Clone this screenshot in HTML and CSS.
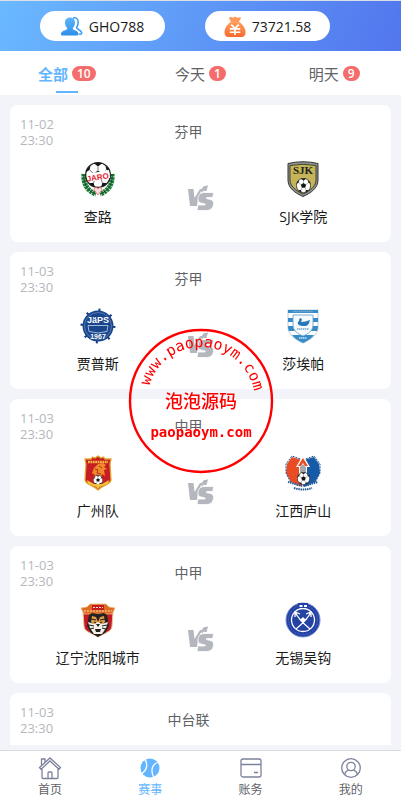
FILE: index.html
```html
<!DOCTYPE html>
<html lang="zh-CN">
<head>
<meta charset="UTF-8">
<meta name="viewport" content="width=device-width, initial-scale=1.0">
<title>赛事</title>
<link rel="stylesheet" href="styles.css">
</head>
<body>
<svg class="sprite" aria-hidden="true">
  <symbol id="vs" viewBox="0 0 26 26">
    <path fill="#b4b7bd" d="M0 4h5.500l1 9 5.500-9h2l-4 9-1 8H2z"/>
    <path fill="#b4b7bd" d="M12 6l4-5h3.500l-5 6z"/>
    <path fill="#b4b7bd" stroke="#fff" stroke-width=".8" d="M25.600 7.500l-.8 5h-5.500c-1.500 0-1.500 1 0 1.300l2.500.5c3 .6 4.200 2.300 3.700 5.200-.6 4-3 6-7.500 6H9l.8-5.500h6.400c1.500 0 1.500-1 0-1.300l-2.500-.5c-3-.6-4.200-2.500-3.700-5.300.6-3.900 3-5.400 7-5.400z"/>
    <path fill="#b4b7bd" d="M15.500 6l3-5.500H20L18.500 6z"/>
  </symbol>
  <symbol id="ball" viewBox="0 0 20 20">
    <circle cx="10" cy="10" r="9.500" fill="#fff" stroke="#222" stroke-width="1"/>
    <path fill="#161616" d="M10 6.500l3.500 2.500-1.300 4H7.800L6.500 9zM6.500.8h7L10 3.500zM.6 8l3-2 .6-3.200A9.500 9.500 0 0 0 .6 8zM19.400 8l-3-2-.6-3.200A9.500 9.500 0 0 1 19.400 8zM3 16.300l3.600-.3 1 3.200A9.500 9.500 0 0 1 3 16.300zM17 16.300l-3.600-.3-1 3.200a9.500 9.500 0 0 0 4.600-2.900z"/>
    <path stroke="#555" stroke-width=".6" d="M10 3.500v3M3.600 6l2.900 3M16.400 6l-2.900 3M7.800 13l-1.200 3M12.200 13l1.200 3"/>
  </symbol>
</svg>

<header class="header">
  <div class="pill">
    <svg class="pill-icon" viewBox="0 0 22 20">
      <defs>
        <linearGradient id="blue" x2="0" y2="1"><stop stop-color="#5db4fb"/><stop offset="1" stop-color="#2e8fe8"/></linearGradient>
      </defs>
      <path fill="none" stroke="#3f9ff0" stroke-width="1.600" d="M12 1.500c4-1 6 2 5 6-.3 1.500-1 2.500-1.500 3.500 0 2 5 2 5.300 5.500 0 1-1 1.300-2.800 1.300"/>
      <path fill="url(#blue)" d="M9 1c3.500 0 5 2.300 5 5.200 0 2-1 4-2.200 5.200v1.400c1.500 1 5.700 1.700 5.700 4.700 0 1-.7 1.500-1.500 1.500H1.500C.6 19 0 18.500 0 17.500c0-3 4.700-3.700 6.200-4.700v-1.400C5 10.200 4 8.200 4 6.200 4 3.300 5.600 1 9 1z"/>
    </svg>
    <span>GHO788</span>
  </div>
  <div class="pill">
    <svg class="pill-icon" viewBox="0 0 22 22">
      <defs>
        <linearGradient id="orange" x2="0" y2="1"><stop stop-color="#ffa063"/><stop offset="1" stop-color="#f96a2c"/></linearGradient>
      </defs>
      <path fill="#ff9a5c" d="M5 1.500c1.500-1 3 .5 4 .3C10.500.5 12 .5 13 1.700c1.500.3 2.700-1 4 0 .8 1-2 3.800-2 5.300H7C7 5.500 4.200 2.700 5 1.500z"/>
      <path fill="url(#orange)" d="M7 6h8c4 2 7 7 7 11 0 3-1.500 5-4 5H4c-2.500 0-4-2-4-5C0 13 3 8 7 6z"/>
      <path fill="none" stroke="#fff" stroke-width="1.700" d="M7 9l4 4 4-4M11 13v7M5.500 13.500h11M5.500 17h11"/>
    </svg>
    <span>73721.58</span>
  </div>
</header>

<div class="tabs" role="tablist">
  <button class="tab active" role="tab" aria-selected="true">全部 <span class="badge">10</span></button>
  <button class="tab" role="tab">今天 <span class="badge">1</span></button>
  <button class="tab" role="tab">明天 <span class="badge">9</span></button>
</div>

<main class="match-list">
  <article class="match">
    <div class="match-head">
      <time>11-02<br>23:30</time>
      <span class="league">芬甲</span>
    </div>
    <div class="teams">
      <div class="team">
        <svg class="logo" viewBox="0 0 36 36">
          <path fill="none" stroke="#1c7a38" stroke-width="5" stroke-dasharray="2.500 .6" d="M4 13c-1 9 3 17 12 20M32 13c1 9-3 17-12 20"/>
          <path fill="none" stroke="#0c5023" stroke-width="1" d="M4 13c-1 9 3 17 12 20M32 13c1 9-3 17-12 20"/>
          <use href="#ball" x="5" y="1" width="26" height="26"/>
          <path fill="#fff" d="M7 13l22-4 1 8-22 4z"/>
          <text class="jaro" x="18" y="19" transform="rotate(-9 18 18)">JARO</text>
          <path fill="#fbdce0" stroke="#e55" stroke-width=".7" d="M18 34l-4-5c0-3 3-3 4-1 1-2 4-2 4 1z"/>
        </svg>
        <span class="team-name">查路</span>
      </div>
      <svg class="vs"><use href="#vs"/></svg>
      <div class="team">
        <svg class="logo" viewBox="0 0 36 36">
          <path fill="#8d9390" stroke="#333" stroke-width="1" d="M3 2.500Q18-1 33 2.500V19c0 8-7 13-15 16.500C10 32 3 27 3 19z"/>
          <path fill="#c5b458" stroke="#44452f" stroke-width="1" d="M5 4.500Q18 2 31 4.500V19c0 6-6 11-13 14C11 30 5 25 5 19z"/>
          <text class="sjk" x="18" y="13">SJK</text>
          <use href="#ball" x="11" y="17" width="15" height="15"/>
        </svg>
        <span class="team-name">SJK学院</span>
      </div>
    </div>
  </article>

  <article class="match">
    <div class="match-head">
      <time>11-03<br>23:30</time>
      <span class="league">芬甲</span>
    </div>
    <div class="teams">
      <div class="team">
        <svg class="logo" viewBox="0 0 36 36">
          <circle cx="18" cy="18" r="16" fill="none" stroke="#163e80" stroke-width="3" stroke-dasharray="2 10.560"/>
          <circle cx="18" cy="18" r="15.500" fill="#19458c"/>
          <circle cx="18" cy="18" r="13.500" fill="none" stroke="#7c9bcb" stroke-width=".6"/>
          <path fill="#19458c" stroke="#c5d5ee" stroke-width=".8" d="M8 17.500h20l-1 6q-9 3-18 0z"/>
          <text class="japs" x="18" y="15">JäPS</text>
          <text class="year" x="18" y="31">1967</text>
        </svg>
        <span class="team-name">贾普斯</span>
      </div>
      <svg class="vs"><use href="#vs"/></svg>
      <div class="team">
        <svg class="logo" viewBox="0 0 36 36">
          <path fill="#fff" stroke="#b9cddd" stroke-width="1" d="M3 2h30v17c0 8-8 13-15 16C11 32 3 27 3 19z"/>
          <path fill="#358cc9" d="M3 2h30v3H3zM3 10h30v4H3zM3 18h30q0 3-1 5H4q-1-2-1-5zM7 27h22c-3 4-7 6-11 8-4-2-8-4-11-8z"/>
          <path fill="#f8fbfd" stroke="#5b9dcc" stroke-width=".8" d="M8 7h20v10c0 6-5 9-10 11C13 26 8 23 8 17z"/>
          <path fill="#2679b7" d="M14 11c2-2 4 0 2 3 3 0 6-1 9-2-1 4-2 6-6 6-4 0-7-1-6-4 1-1 2-2 1-3z"/>
          <path stroke="#76a9ce" stroke-width="1.500" stroke-dasharray="1.500 .5" d="M12 21h12M8 3.500h20"/>
          <path stroke="#cfe4f3" stroke-width="1.500" stroke-dasharray="1.500 .5" d="M14 30h8"/>
        </svg>
        <span class="team-name">莎埃帕</span>
      </div>
    </div>
  </article>

  <article class="match">
    <div class="match-head">
      <time>11-03<br>23:30</time>
      <span class="league">中甲</span>
    </div>
    <div class="teams">
      <div class="team">
        <svg class="logo" viewBox="0 0 36 36">
          <path fill="#c91b22" stroke="#dfa52f" stroke-width="1.300" d="M5 4h6l1.500-2L15 3l3-2 3 2 2.500-1L25 4h6l-1 5 1 16c-1 5-8 5-13 10C13 30 6 30 5 25L6 9z"/>
          <path stroke="#f1bd42" stroke-width="2.500" stroke-dasharray="1.800 .6" d="M8 7h20"/>
          <path fill="#ee8a2b" d="M13 24l2-4-3-2 2-5 4-4 5-1 3 2-2 2 3 2-3 1 1 6-3-2-1 5z"/>
          <path fill="none" stroke="#a7191f" stroke-width=".8" d="M15 14l3 1-1 3 4 1M19 11l3 2M16 20l4 1"/>
          <use href="#ball" x="13" y="20" width="10" height="10"/>
          <path fill="#efc13f" d="M7 25l7 4h8l7-4-1 4-8 3-2 2-2-2-8-3z"/>
        </svg>
        <span class="team-name">广州队</span>
      </div>
      <svg class="vs"><use href="#vs"/></svg>
      <div class="team">
        <svg class="logo" viewBox="0 0 36 36">
          <path fill="#e94b24" d="M17 5L7 2 2 9l-1 9 5 9 11 5z"/>
          <path fill="#155ba7" d="M19 5l10-3 5 7 1 9-5 9-11 5z"/>
          <path fill="none" stroke="#174c83" stroke-width="1" stroke-dasharray="2 1" d="M18 5L7 1 1 9v9l5 10M18 5l11-4 6 8v9l-5 10"/>
          <path fill="#fff" d="M18 0l7 12h-3v12h-8V12h-3z"/>
          <path fill="#e94b24" d="M18 3l5 8h-3l-2-3-2 3h-3z"/>
          <path fill="#a6a8ab" d="M15 12l3-3 3 3v10h-6z"/>
          <use href="#ball" x="12" y="17" width="13" height="13"/>
          <path fill="none" stroke="#285a95" stroke-width="2" stroke-dasharray="1.500 .7" d="M3 27l7 2q8 3 16 0l7-2M9 33q9 3 18 0"/>
        </svg>
        <span class="team-name">江西庐山</span>
      </div>
    </div>
  </article>

  <article class="match">
    <div class="match-head">
      <time>11-03<br>23:30</time>
      <span class="league">中甲</span>
    </div>
    <div class="teams">
      <div class="team">
        <svg class="logo" viewBox="0 0 36 36">
          <path fill="#c81824" stroke="#e4c594" stroke-width="1" d="M3 10h30l-1 14c0 6-8 7-14 11C12 31 4 30 4 24z"/>
          <path fill="#df6a22" stroke="#ecb878" stroke-width=".8" d="M1 6l6-1 3-3h16l3 3 6 1-3 6H4z"/>
          <path fill="#c41b21" d="M12 3h12v5H12z"/>
          <path stroke="#f9dbb0" stroke-width="1" stroke-dasharray="2 1" d="M4 9h28M13 5.500h10"/>
          <path fill="#242323" d="M9 13l3-2 6 1 6-1 3 2 2 11-4 7-7 4-7-4-4-7z"/>
          <path fill="#e59a42" d="M12 14l4 1 2 5 2-5 4-1 1 6-4 4h-6l-4-4z"/>
          <path fill="#f4f0e8" d="M8 20l6 2 4-2 4 2 6-2-2 6-4 6h-8l-4-6z"/>
          <path fill="none" stroke="#222" stroke-width="1.200" d="M11 17l5 1M25 17l-5 1M9 23l5 1M27 23l-5 1M10 27l4-1M26 27l-4-1M18 12v6M15 13l2 2M21 13l-2 2M14 20l2 1M22 20l-2 1"/>
          <path fill="#222" d="M16 22h4l-2 3zM15 27h6l-1 3h-4z"/>
        </svg>
        <span class="team-name">辽宁沈阳城市</span>
      </div>
      <svg class="vs"><use href="#vs"/></svg>
      <div class="team">
        <svg class="logo" viewBox="0 0 36 36">
          <circle cx="18" cy="18" r="17" fill="#2040a5" stroke="#7b8dca" stroke-width="1"/>
          <circle cx="18" cy="18" r="11.500" fill="#2442a2" stroke="#fff" stroke-width="1.300"/>
          <circle cx="18" cy="18" r="14.500" fill="none" stroke="#5f76c2" stroke-width="1" stroke-dasharray="1 1"/>
          <path fill="#2040a5" d="M13 1h10v5H13z"/>
          <path fill="none" stroke="#fff" stroke-width="1.300" d="M10 10q4 8 15 17M26 10q-4 8-15 17M10 15v-5l5 2M26 15v-5l-5 2M14 17l4 2 4-2"/>
          <path fill="#fff" d="M18 15l3 3-3 3-3-3z"/>
          <path stroke="#fff" stroke-width="2" d="M14.500 4h3M19 4h3"/>
        </svg>
        <span class="team-name">无锡吴钩</span>
      </div>
    </div>
  </article>

  <article class="match">
    <div class="match-head">
      <time>11-03<br>23:30</time>
      <span class="league">中台联</span>
    </div>
    <div class="teams"></div>
  </article>
</main>

<nav class="tabbar">
  <a href="#">
    <svg viewBox="0 0 24 24">
      <path d="M1.500 11.500L12 2l10.500 9.500-1.500 1.700L12 5l-9 8.200zM3.500 9.500V3H7v3.300M4 13v8.500q0 1 1 1h14q1 0 1-1V13M10 22v-5q0-1 1-1h2q1 0 1 1v5"/>
    </svg>
    <span>首页</span>
  </a>
  <a href="#" class="active">
    <svg viewBox="0 0 24 24">
      <circle class="solid" cx="12" cy="12" r="9.500"/>
      <path class="seam" d="M6 2c4 5 4 12-3 16M21 6c-7 2-9 8-5 16"/>
    </svg>
    <span>赛事</span>
  </a>
  <a href="#">
    <svg viewBox="0 0 24 24">
      <rect x="2" y="3" width="20" height="18" rx="2"/>
      <path d="M2 8.500h20M15 16.500h4"/>
    </svg>
    <span>账务</span>
  </a>
  <a href="#">
    <svg viewBox="0 0 24 24">
      <circle cx="12" cy="12" r="9.300"/>
      <circle cx="12" cy="10.500" r="4.200"/>
      <path d="M5.700 18.700c.3-2.500 1.800-4 4-4.600M18.300 18.700c-.3-2.500-1.800-4-4-4.600"/>
    </svg>
    <span>我的</span>
  </a>
</nav>

<svg class="watermark" viewBox="0 0 146 146">
  <defs><path id="arc" d="M19 73a54 54 0 0 1 108 0v12"/></defs>
  <circle cx="73" cy="73" r="71"/>
  <text class="ring"><textPath href="#arc" startOffset="15">www.paopaoym.com</textPath></text>
  <text class="brand" x="73" y="80">泡泡源码</text>
  <text class="site" x="73" y="109">paopaoym.com</text>
</svg>
</body>
</html>
```
FILE: styles.css
```css
* {
  box-sizing: border-box;
}

body {
  display: flex;
  flex-direction: column;
  height: 100vh;
  margin: 0;
  background: #f3f4f9;
  color: #1a1a1a;
  font-family: "Open Sans", "Noto Sans CJK SC", sans-serif;
  font-size: 14px;
}

button {
  font-family: inherit;
}

.sprite {
  position: absolute;
  width: 0;
  height: 0;
}

/* header */
.header {
  display: flex;
  flex: none;
  gap: 40px;
  padding: 10px 40px;
  border-top: 1px solid #dcdfe6;
  background: linear-gradient(110deg, #6ab9ff, #5276ee);
}

.pill {
  display: flex;
  align-items: center;
  justify-content: center;
  gap: 6px;
  width: 125px;
  height: 30px;
  border-radius: 15px;
  background: #fff;
}

.pill-icon {
  width: 22px;
  height: 21px;
}

/* day tabs */
.tabs {
  display: flex;
  flex: none;
  height: 44px;
  background: #fff;
}

.tab {
  position: relative;
  display: flex;
  flex: 1;
  align-items: center;
  justify-content: center;
  gap: 4px;
  padding: 0;
  border: 0;
  background: none;
  color: #606266;
  font-size: 15px;
}

.tab.active {
  color: #64b5ff;
  font-weight: bold;
}

.tab.active::after {
  content: "";
  position: absolute;
  bottom: 2px;
  left: 50%;
  width: 22px;
  height: 2px;
  margin-left: -11px;
  background: #64b5ff;
}

.badge {
  padding: 0 5px;
  border-radius: 8px;
  background: #f56c6c;
  color: #fff;
  font-size: 12px;
  font-weight: 600;
  line-height: 15px;
}

/* matches */
.match-list {
  flex: 1;
  min-height: 0;
  margin-bottom: 5px;
  padding: 10px 10px 0;
  overflow: hidden;
}

.match {
  margin-bottom: 10px;
  padding: 11px 10px 15px;
  border-radius: 8px;
  background: #fff;
}

.match-head {
  display: flex;
  align-items: center;
  line-height: 16px;
}

.match-head time {
  width: 36px;
  color: #b4b7bd;
  font-size: 13px;
}

.league {
  flex: 1;
  padding-right: 60px;
  color: #606266;
  text-align: center;
}

.teams {
  display: flex;
  align-items: center;
  min-height: 66px;
  margin-top: 13px;
}

.team {
  display: flex;
  flex: 1;
  flex-direction: column;
  align-items: center;
  gap: 10px;
}

.team-name {
  line-height: 20px;
}

.logo {
  width: 36px;
  height: 36px;
}

.logo text {
  font-family: "Liberation Sans", sans-serif;
  font-weight: bold;
  text-anchor: middle;
}

.logo .jaro {
  fill: #e72535;
  font-size: 8px;
}

.logo .sjk {
  fill: #20231f;
  font-family: "Liberation Serif", serif;
  font-size: 11px;
}

.logo .japs {
  fill: #fff;
  font-size: 9px;
}

.logo .year {
  fill: #fff;
  font-size: 7px;
}

.vs {
  width: 26px;
  height: 26px;
  margin: 8px 12px 0;
}

/* bottom bar */
.tabbar {
  display: flex;
  flex: none;
  height: 52px;
  border-top: 1px solid #d8dae2;
  background: #fff;
}

.tabbar a {
  display: flex;
  flex: 1;
  flex-direction: column;
  align-items: center;
  padding-top: 5px;
  color: #606266;
  font-size: 12px;
  line-height: 20px;
  text-decoration: none;
}

.tabbar svg {
  width: 24px;
  height: 24px;
  fill: none;
  stroke: #7c829b;
  stroke-width: 1.3;
}

.tabbar a.active {
  color: #64b5ff;
}

.tabbar .solid {
  fill: #64b5ff;
  stroke: none;
}

.tabbar .seam {
  stroke: #fff;
}

/* stamp over the page */
.watermark {
  position: fixed;
  top: 50%;
  left: 50%;
  width: 146px;
  height: 146px;
  transform: translate(-50%, -50%);
  fill: #f00;
  text-anchor: middle;
  pointer-events: none;
}

.watermark circle {
  fill: none;
  stroke: #f00;
  stroke-width: 2.4;
}

.watermark .site {
  font-family: "DejaVu Sans Mono", monospace;
  font-size: 14px;
  font-weight: bold;
}

.watermark .ring {
  font-family: "DejaVu Sans Mono", monospace;
  font-size: 15px;
  text-anchor: start;
}

.watermark .brand {
  font-family: "Noto Sans CJK SC", sans-serif;
  font-size: 18px;
  font-weight: 500;
}
```
